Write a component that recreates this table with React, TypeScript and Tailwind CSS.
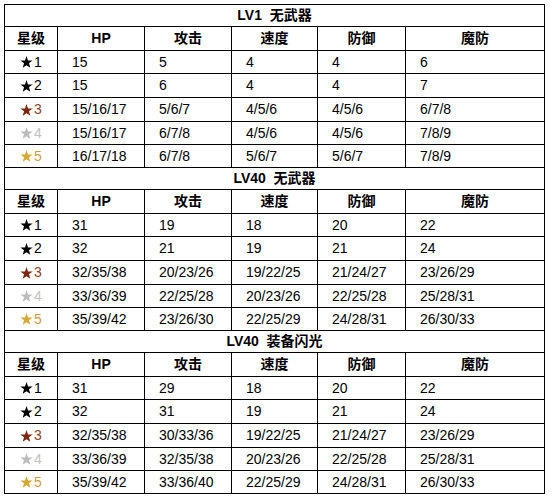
import React from "react";

type Sec = { title: string; rows: string[][] };

const sections: Sec[] = [
  {
    title: "LV1 无武器",
    rows: [
      ["15", "5", "4", "4", "6"],
      ["15", "6", "4", "4", "7"],
      ["15/16/17", "5/6/7", "4/5/6", "4/5/6", "6/7/8"],
      ["15/16/17", "6/7/8", "4/5/6", "4/5/6", "7/8/9"],
      ["16/17/18", "6/7/8", "5/6/7", "5/6/7", "7/8/9"],
    ],
  },
  {
    title: "LV40 无武器",
    rows: [
      ["31", "19", "18", "20", "22"],
      ["32", "21", "19", "21", "24"],
      ["32/35/38", "20/23/26", "19/22/25", "21/24/27", "23/26/29"],
      ["33/36/39", "22/25/28", "20/23/26", "22/25/28", "25/28/31"],
      ["35/39/42", "23/26/30", "22/25/29", "24/28/31", "26/30/33"],
    ],
  },
  {
    title: "LV40 装备闪光",
    rows: [
      ["31", "29", "18", "20", "22"],
      ["32", "31", "19", "21", "24"],
      ["32/35/38", "30/33/36", "19/22/25", "21/24/27", "23/26/29"],
      ["33/36/39", "32/35/38", "20/23/26", "22/25/28", "25/28/31"],
      ["35/39/42", "33/36/40", "22/25/29", "24/28/31", "26/30/33"],
    ],
  },
];

const starColors = [
  { star: "#000000", text: "#000000" },
  { star: "#000000", text: "#000000" },
  { star: "#7a2812", text: "#8a4228" },
  { star: "#bdbdbd", text: "#c2c2c2" },
  { star: "#d6a935", text: "#c9a041" },
];

const dataHeights = ["h-[23px]", "h-[24px]", "h-[24px]", "h-[23px]", "h-[23px]"];
const headers = ["星级", "HP", "攻击", "速度", "防御", "魔防"];
const colW = ["w-[53px]", "w-[87px]", "w-[87px]", "w-[86px]", "w-[88px]", "w-[139px]"];

function Star({ color }: { color: string }) {
  return (
    <svg width="13" height="12" viewBox="0 0 24 23" className="mr-[1px]">
      <polygon
        points="12,0 14.9,8.4 23.8,8.6 16.7,14 19.3,22.6 12,17.5 4.7,22.6 7.3,14 0.2,8.6 9.1,8.4"
        fill={color}
      />
    </svg>
  );
}

export default function App() {
  return (
    <div className="bg-white w-[551px] h-[499px] pt-[4px] pl-[4px]" style={{ fontFamily: '"Liberation Sans", Arial, "Noto Sans CJK SC", sans-serif' }}>
      <div className="w-[541px] border-l border-t border-black text-[14px] text-black">
        {sections.map((s) => (
          <div key={s.title}>
            <div className="h-[22px] border-b border-r border-black flex items-center justify-center font-bold">
              {s.title.split(" ")[0]}&nbsp;&nbsp;{s.title.split(" ")[1]}
            </div>
            <div className="h-[24px] flex">
              {headers.map((h, i) => (
                <div key={h} className={`${colW[i]} border-b border-r border-black flex items-center justify-center font-bold`}>
                  {h}
                </div>
              ))}
            </div>
            {s.rows.map((r, ri) => (
              <div key={ri} className={`${dataHeights[ri]} flex`}>
                <div className={`${colW[0]} border-b border-r border-black flex items-center justify-center`}>
                  <Star color={starColors[ri].star} />
                  <span style={{ color: starColors[ri].text }}>{ri + 1}</span>
                </div>
                {r.map((v, ci) => (
                  <div key={ci} className={`${colW[ci + 1]} border-b border-r border-black flex items-center pl-[14px]`}>
                    {v}
                  </div>
                ))}
              </div>
            ))}
          </div>
        ))}
      </div>
    </div>
  );
}
